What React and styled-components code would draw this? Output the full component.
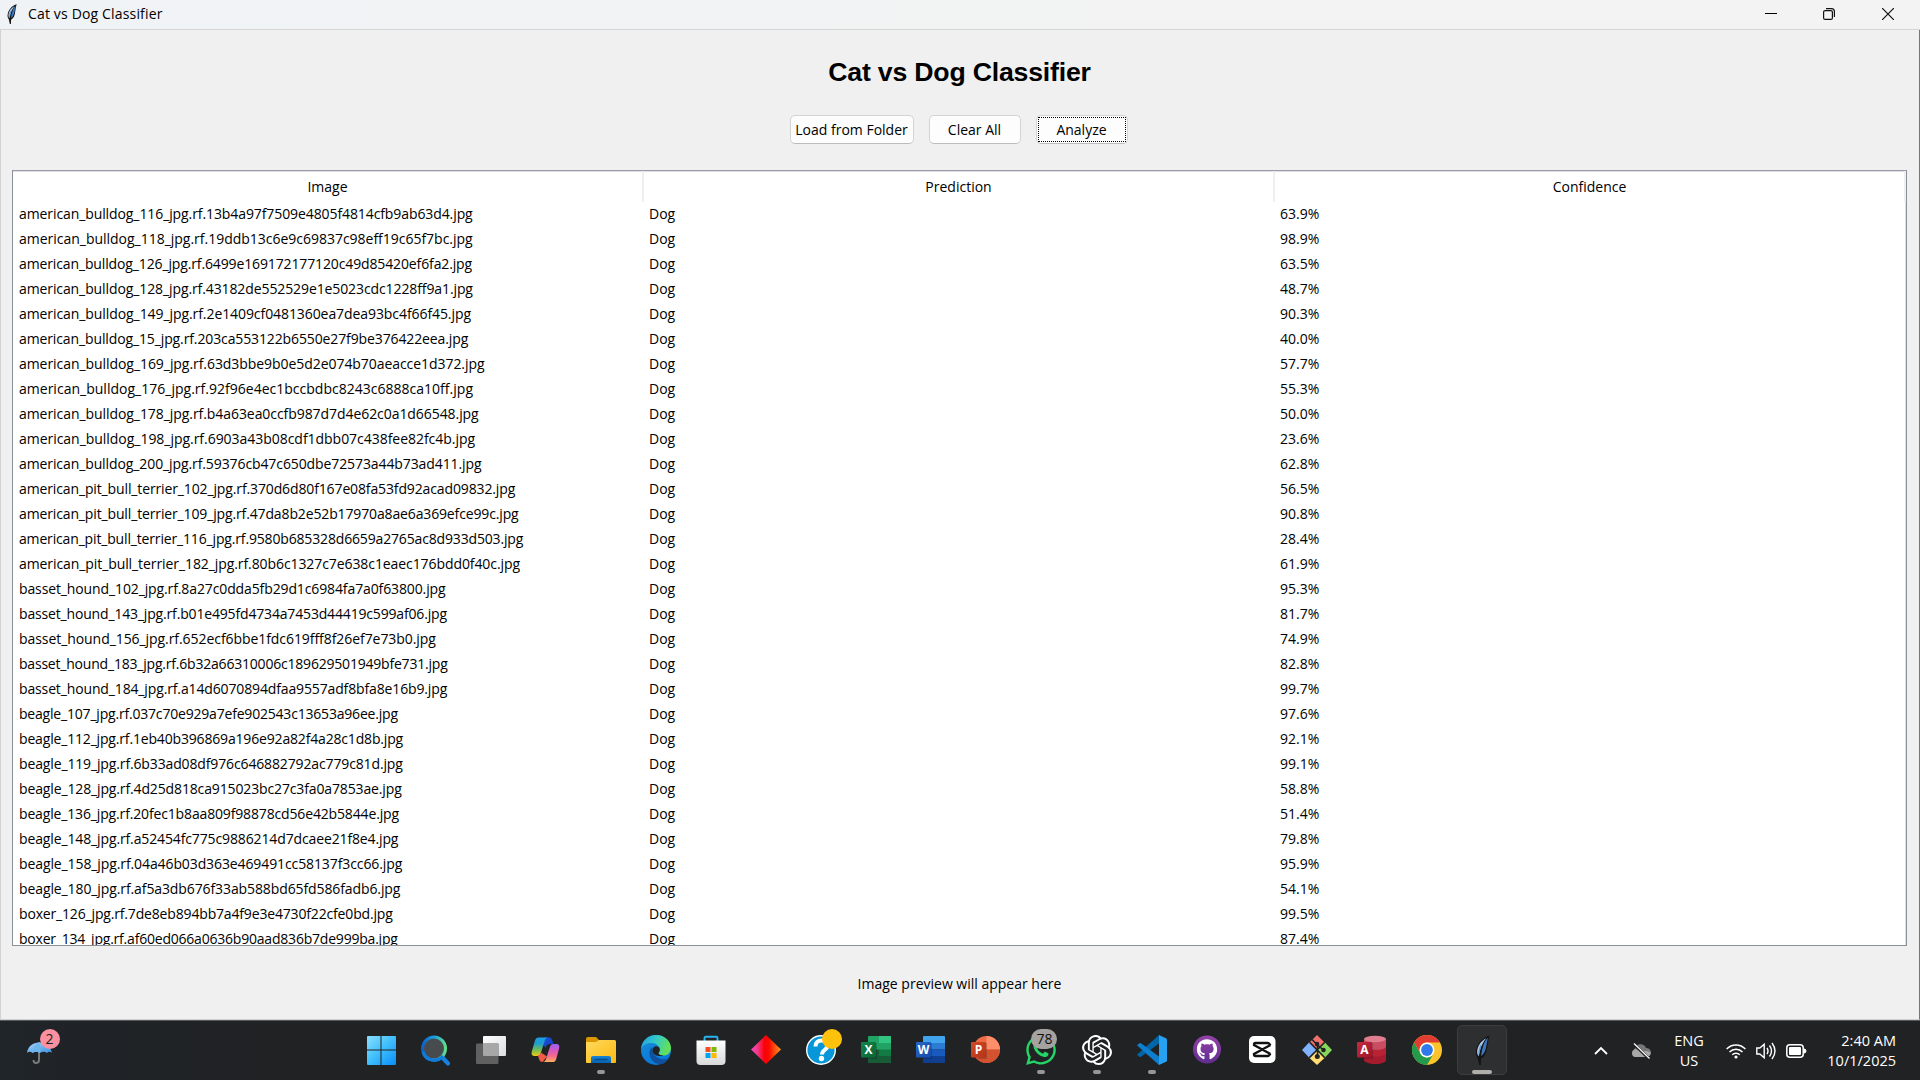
import React from "react";
import styled, { createGlobalStyle } from "styled-components";
import { FaWhatsapp, FaGithub } from "react-icons/fa";
import { SiOpenai } from "react-icons/si";

const Global = createGlobalStyle`
  * { box-sizing: border-box; }
  body { margin: 0; overflow: hidden; }
`;

const ui = `"Open Sans", "Noto Sans", sans-serif`;

const Screen = styled.div`
  width: 1920px;
  height: 1080px;
  display: flex;
  flex-direction: column;
  overflow: hidden;
  font-family: ${ui};
  font-size: 14px;
  color: #000;
  background: #f0f0f0;
`;

const TitleBar = styled.header`
  height: 30px;
  flex: none;
  display: flex;
  align-items: center;
  padding: 0 3px 1px 5px;
  background: linear-gradient(90deg, #f0f3f6, #f3f3f3 60%);
  border-bottom: 1px solid #d3d5d5;
`;

const WindowTitle = styled.span`
  flex: 1;
  margin-left: 9px;
  font-size: 14px;
  letter-spacing: 0.16px;
  line-height: 28px;
  color: #000;
`;

const WindowButton = styled.div`
  width: 58.5px;
  height: 28px;
  display: flex;
  align-items: center;
  justify-content: center;
`;

const Body = styled.main`
  flex: 1;
  min-height: 0;
  display: flex;
  flex-direction: column;
  align-items: center;
  padding: 26px 12px 0 11px;
  border-left: 1px solid #d2d2d2;
  border-right: 1px solid #777;
  border-bottom: 1px solid #d0d0d0;
`;

const Heading = styled.h1`
  margin: 0;
  height: 32px;
  font: bold 26.67px/32px "Liberation Sans", Arial, sans-serif;
  letter-spacing: -0.2px;
  color: #000;
`;

const Buttons = styled.div`
  display: flex;
  gap: 15px;
  margin-top: 27px;
  padding-right: 2px;
`;

const Button = styled.button`
  width: ${(p) => p.$w}px;
  height: 29px;
  padding: 1px;
  border: 1px solid #d4d4d4;
  border-bottom-color: #bcbcbc;
  border-radius: 5px;
  background: #fdfdfd;
  font: 14px/20px ${ui};
  color: #000;
  white-space: nowrap;
`;

const Focus = styled.span`
  display: block;
  height: 25px;
  line-height: 23px;
  border: 1px dotted #000;
`;

const Table = styled.section`
  width: 1895px;
  height: 776px;
  flex: none;
  margin-top: 26px;
  display: flex;
  flex-direction: column;
  overflow: hidden;
  background: #fff;
  border: 1px solid #8b9097;
  border-top-color: #9a9ba5;
  box-shadow: inset -1px 1px 0 #dedfe4;
`;

const HeadRow = styled.div`
  display: grid;
  grid-template-columns: 631px 631px 1fr;
  height: 30px;
  flex: none;
`;

const HeadCell = styled.div`
  text-align: center;
  line-height: 31px;
  border-right: 2px solid #efefef;
`;

const Row = styled.div`
  display: grid;
  grid-template-columns: 631px 631px 1fr;
  height: 25px;
  flex: none;
`;

const Cell = styled.div`
  padding-left: ${(p) => p.$pad || 5}px;
  line-height: 25px;
  white-space: nowrap;
  letter-spacing: ${(p) => p.$track || 0}px;
`;

const Preview = styled.p`
  margin: 26px 0 0;
  line-height: 24px;
`;

const Taskbar = styled.footer`
  height: 60px;
  flex: none;
  display: flex;
  background: linear-gradient(90deg, #202529 0, #1f2327 90px, #212223 340px, #212223 100%);
  border-top: 1px solid #585b5c;
`;

const Weather = styled.div`
  width: 353px;
  padding: 8px 0 0 24px;
`;

const Apps = styled.nav`
  flex: 1;
  display: flex;
`;

const Slot = styled.div`
  width: 55.08px;
  height: 59px;
  display: flex;
  flex-direction: column;
  align-items: center;
  padding-top: 4px;
`;

const Tile = styled.div`
  width: 50px;
  height: 50px;
  position: relative;
  display: flex;
  align-items: center;
  justify-content: center;
  border-radius: 5px;
  border: 1px solid ${(p) => (p.$active ? "#3b3d3f" : "transparent")};
  background: ${(p) => (p.$active ? "#2d2f31" : "none")};
`;

const Indicator = styled.i`
  position: absolute;
  bottom: 0;
  left: 50%;
  width: ${(p) => p.$w}px;
  height: 4px;
  margin-left: ${(p) => -p.$w / 2}px;
  border-radius: 2px;
  background: ${(p) => (p.$w > 10 ? "#b0aeaa" : "#969798")};
`;

const CountBadge = styled.b`
  position: absolute;
  left: 14px;
  top: 3px;
  width: 26px;
  height: 20px;
  border-radius: 10px;
  background: #a5a2a0;
  color: #111;
  font: 14px/20px ${ui};
  text-align: center;
`;

const Tray = styled.aside`
  display: flex;
  align-items: center;
  color: #fff;
  width: 340px;
  padding-left: 13px;
`;

const Clock = styled.div`
  width: ${(p) => p.$w}px;
  text-align: ${(p) => p.$align};
  font-size: 14.5px;
  line-height: 20px;
  margin-left: ${(p) => p.$left || 0}px;
`;

const TrayIcon = styled.span`
  display: flex;
  margin-left: ${(p) => p.$left || 0}px;
`;

/* file name, confidence, letter spacing of the file name */
const rows = [
  ["american_bulldog_116_jpg.rf.13b4a97f7509e4805f4814cfb9ab63d4.jpg", "63.9%", -0.094],
  ["american_bulldog_118_jpg.rf.19ddb13c6e9c69837c98eff19c65f7bc.jpg", "98.9%", -0.017],
  ["american_bulldog_126_jpg.rf.6499e169172177120c49d85420ef6fa2.jpg", "63.5%", -0.13],
  ["american_bulldog_128_jpg.rf.43182de552529e1e5023cdc1228ff9a1.jpg", "48.7%", -0.103],
  ["american_bulldog_149_jpg.rf.2e1409cf0481360ea7dea93bc4f66f45.jpg", "90.3%", -0.078],
  ["american_bulldog_15_jpg.rf.203ca553122b6550e27f9be376422eea.jpg", "40.0%", -0.12],
  ["american_bulldog_169_jpg.rf.63d3bbe9b0e5d2e074b70aeacce1d372.jpg", "57.7%", -0.06],
  ["american_bulldog_176_jpg.rf.92f96e4ec1bccbdbc8243c6888ca10ff.jpg", "55.3%", 0.012],
  ["american_bulldog_178_jpg.rf.b4a63ea0ccfb987d7d4e62c0a1d66548.jpg", "50.0%", -0.065],
  ["american_bulldog_198_jpg.rf.6903a43b08cdf1dbb07c438fee82fc4b.jpg", "23.6%", -0.035],
  ["american_bulldog_200_jpg.rf.59376cb47c650dbe72573a44b73ad411.jpg", "62.8%", -0.099],
  ["american_pit_bull_terrier_102_jpg.rf.370d6d80f167e08fa53fd92acad09832.jpg", "56.5%", -0.129],
  ["american_pit_bull_terrier_109_jpg.rf.47da8b2e52b17970a8ae6a369efce99c.jpg", "90.8%", -0.138],
  ["american_pit_bull_terrier_116_jpg.rf.9580b685328d6659a2765ac8d933d503.jpg", "28.4%", -0.16],
  ["american_pit_bull_terrier_182_jpg.rf.80b6c1327c7e638c1eaec176bdd0f40c.jpg", "61.9%", -0.085],
  ["basset_hound_102_jpg.rf.8a27c0dda5fb29d1c6984fa7a0f63800.jpg", "95.3%", -0.118],
  ["basset_hound_143_jpg.rf.b01e495fd4734a7453d44419c599af06.jpg", "81.7%", -0.167],
  ["basset_hound_156_jpg.rf.652ecf6bbe1fdc619fff8f26ef7e73b0.jpg", "74.9%", -0.065],
  ["basset_hound_183_jpg.rf.6b32a66310006c189629501949bfe731.jpg", "82.8%", -0.205],
  ["basset_hound_184_jpg.rf.a14d6070894dfaa9557adf8bfa8e16b9.jpg", "99.7%", -0.137],
  ["beagle_107_jpg.rf.037c70e929a7efe902543c13653a96ee.jpg", "97.6%", -0.196],
  ["beagle_112_jpg.rf.1eb40b396869a196e92a82f4a28c1d8b.jpg", "92.1%", -0.17],
  ["beagle_119_jpg.rf.6b33ad08df976c646882792ac779c81d.jpg", "99.1%", -0.137],
  ["beagle_128_jpg.rf.4d25d818ca915023bc27c3fa0a7853ae.jpg", "58.8%", -0.135],
  ["beagle_136_jpg.rf.20fec1b8aa809f98878cd56e42b5844e.jpg", "51.4%", -0.152],
  ["beagle_148_jpg.rf.a52454fc775c9886214d7dcaee21f8e4.jpg", "79.8%", -0.128],
  ["beagle_158_jpg.rf.04a46b03d363e469491cc58137f3cc66.jpg", "95.9%", -0.104],
  ["beagle_180_jpg.rf.af5a3db676f33ab588bd65fd586fadb6.jpg", "54.1%", -0.104],
  ["boxer_126_jpg.rf.7de8eb894bb7a4f9e3e4730f22cfe0bd.jpg", "99.5%", -0.166],
  ["boxer_134_jpg.rf.af60ed066a0636b90aad836b7de999ba.jpg", "87.4%", -0.211],
];

const Lin = ({ id, stops, x2 = 0, y2 = 1 }) => (
  <linearGradient id={id} x1="0" y1="0" x2={x2} y2={y2}>
    {stops.map((c, i) => (
      <stop key={i} offset={i / (stops.length - 1)} stopColor={c} />
    ))}
  </linearGradient>
);

const Svg = ({ children, s = 30 }) => (
  <svg width={s} height={s} viewBox="0 0 30 30" overflow="visible">
    {children}
  </svg>
);

const Feather = ({ w, h }) => (
  <svg width={w} height={h} viewBox="0 0 14 28">
    <path d="M13.5.5C8 2 2.5 7 1 14c-.6 3 0 5.500 1.500 7.500L4 28h1.500l.2-6c3-1.500 4.800-5 5.500-9 .2-3 1-5 1-7Z" fill="#141414" />
    <path d="M12 2.500C8.500 6 7 11 5.600 19.500 8.500 18 10 14 10.600 10Z" fill="#3f78bd" />
    <path d="M10.500 3C5.500 5.500 2.500 10 2 15c-.2 2 .4 4 1.500 5C4.500 13 6.500 8 10.500 3Z" fill="#a9c8e6" />
    <path d="M5.500 9.500C4.500 12 4 15 3.600 18" stroke="#5d92cd" strokeWidth="1.200" fill="none" />
  </svg>
);

const Office = ({ id, letter, dark, children }) => (
  <Svg>
    <defs><Lin id={id} stops={dark} x2={1} /></defs>
    {children}
    <path d="M7 8h9v16H7z" fill="#000" opacity=".18" />
    <rect x="0" y="7" width="15" height="15.500" rx="1" fill={`url(#${id})`} />
    <text x="7.500" y="19" textAnchor="middle" fontFamily="Open Sans" fontWeight="700" fontSize="12" fill="#fff">{letter}</text>
  </Svg>
);

const icons = [
  { name: "start", el: (
    <Svg>
      <defs><linearGradient id="win" gradientUnits="userSpaceOnUse" x1="0" y1="0" x2="29" y2="30"><stop stopColor="#8fe2fe" /><stop offset=".5" stopColor="#42bffb" /><stop offset="1" stopColor="#0a90f8" /></linearGradient></defs>
      <path d="M1 2q0-1 1-1h12.500v13.500H1ZM15.500 1H29q1 0 1 1v12.500H15.500ZM1 15.500h13.500V30H2q-1 0-1-1ZM15.500 15.500H30V29q0 1-1 1H15.500Z" fill="url(#win)" />
    </Svg>) },
  { name: "search", el: (
    <Svg>
      <defs><Lin id="lens" stops={["#0a62c8", "#1b9de2", "#5fe08c"]} x2={1} y2={0} /></defs>
      <path d="M20.500 21.500 27 28.500" stroke="#1682dd" strokeWidth="4.200" strokeLinecap="round" />
      <circle cx="13" cy="13.500" r="11.500" fill="#484b4e" stroke="url(#lens)" strokeWidth="3" />
      <path d="M2 17a11.500 11.500 0 0 0 20 4" fill="none" stroke="#0f7bdc" strokeWidth="3" />
    </Svg>) },
  { name: "task-view", el: (
    <Svg>
      <defs><Lin id="tv" stops={["#fff", "#dcdcdc"]} x2={1} /></defs>
      <rect x="7" y="1" width="23" height="20" rx="1" fill="url(#tv)" />
      <rect x="0" y="8.500" width="22.500" height="20.500" rx="1" fill="#606060" />
      <path d="M7 8.500h15.500V21H8q-1 0-1-1Z" fill="#a7a7a7" />
    </Svg>) },
  { name: "copilot", el: (
    <Svg>
      <defs>
        <Lin id="cp1" stops={["#17a0e8", "#229dcc", "#70bc55", "#f0cb18"]} />
        <Lin id="cp2" stops={["#9a62f2", "#d258c4", "#f4698c", "#ffb05c"]} />
        <Lin id="cp3" stops={["#1b55df", "#1638b8"]} x2={1} />
      </defs>
      <path d="M18 2.500c2.300 0 3 1.700 3.700 4L22.500 9H19c-2.500 0-3.500 1-4.500 4L11 8l2-5.500Z" fill="url(#cp3)" />
      <path d="M7.500 2.500h10c-2.500 0-3.300 1.600-4 4L10 17.500C9.200 20 8.200 21 6 21H3.500C1 21 0 19 .8 16.500L4 5.500c.7-2 1.700-3 3.500-3Z" fill="url(#cp1)" />
      <path d="M11.500 27c-2.200 0-3.100-1.500-3.800-4L7 20.500c1.800-.3 2.500-1.500 3-3l6 4Z" fill="#f15b45" />
      <path d="M22.500 27h-11c2.500 0 3.300-2 4-4.500l3.200-10C19.500 10 20.500 9 22.500 9h3c2.400 0 3.300 2 2.600 4.500L25.500 23c-.7 2.500-1.600 4-3 4Z" fill="url(#cp2)" />
    </Svg>) },
  { name: "explorer", run: 8, el: (
    <Svg>
      <defs><Lin id="fold" stops={["#ffda5c", "#fcb913"]} x2={1} /><Lin id="fold2" stops={["#1684d8", "#0b61ae"]} /></defs>
      <path d="M0 4q0-2 2-2h8l3 3v5H0Z" fill="#dc9600" />
      <path d="M0 7h10l3-2h15.500Q30 5 30 6.500V27q0 1-1 1H1q-1 0-1-1Z" fill="url(#fold)" />
      <path d="M5 28v-5q0-2 2-2h16q2 0 2 2v5Z" fill="url(#fold2)" />
      <path d="M9 24.500h12" stroke="#064b8a" strokeWidth="1.300" strokeLinecap="round" />
    </Svg>) },
  { name: "edge", el: (
    <Svg>
      <defs><Lin id="ed1" stops={["#229cdf", "#32c8cc", "#62e05b"]} x2={1} y2={0.3} /><Lin id="ed2" stops={["#1a8ed6", "#0878da"]} x2={0.4} /></defs>
      <circle cx="15" cy="15" r="15" fill="url(#ed2)" />
      <path d="M0 14C1 5 7.500 0 15 0c9 0 15 6.500 15 13 0 5-3.500 7.500-7.500 7.500-3.500 0-5-1.300-5-2.300 0-.7 1.300-1.500 1.300-3.700 0-3.500-3.500-6.500-8.300-6.500C5.500 8 1.500 10.500 0 14Z" fill="url(#ed1)" />
      <path d="M11 12c-3 3-3.500 8-.5 12.500 3 4 8 5.500 12 4 2.500-1.500 4.500-3.500 5.500-5.500-2.500 1.500-7.500 2-11 0-4.500-2.500-6.500-6.500-6-11Z" fill="#10509c" />
      <path d="M18.800 14.500c0 2.200-1.300 3-1.300 3.700 0 1 1.500 2.300 5 2.300-4 1.500-10 0-11-4-.5-2.500 1-5 3.500-5.200 2.500 0 3.800 1.500 3.800 3.200Z" fill="#202224" />
    </Svg>) },
  { name: "store", el: (
    <Svg>
      <defs><Lin id="st" stops={["#fff", "#dadada"]} /></defs>
      <path d="M8.500 7V3q0-1.200 1.200-1.200h10.600q1.200 0 1.200 1.200v4" fill="none" stroke="#28b4f0" strokeWidth="1.900" />
      <path d="M.5 5.500H29.500V26q0 4-4 4h-21q-4 0-4-4Z" fill="url(#st)" />
      <path d="M9.500 12h5v5h-5z" fill="#f25022" /><path d="M15.500 12h5v5h-5z" fill="#7fba00" />
      <path d="M9.500 18h5v5h-5z" fill="#00a4ef" /><path d="M15.500 18h5v5h-5z" fill="#ffb900" />
    </Svg>) },
  { name: "diamond", el: (
    <Svg>
      <defs><linearGradient id="dia"><stop stopColor="#f247bd" /><stop offset=".2" stopColor="#f13c8f" /><stop offset=".45" stopColor="#fb0008" /><stop offset=".6" stopColor="#fb0a00" /><stop offset="1" stopColor="#ff9a1e" /></linearGradient></defs>
      <path d="M15 0 30 14.500 15 29 0 14.500Z" fill="url(#dia)" />
    </Svg>) },
  { name: "help", el: (
    <Svg>
      <circle cx="15" cy="15" r="14.300" fill="#0796d7" stroke="#fff" strokeWidth="1.400" />
      <path d="M9.500 11.500c0-4 2.500-6 6-6s6 2 6 5c0 4.500-5.500 4-5.500 9" fill="none" stroke="#fff" strokeWidth="4" />
      <circle cx="15.500" cy="23.500" r="2.700" fill="#fff" />
      <circle cx="26" cy="4" r="10" fill="#ffc20c" />
    </Svg>) },
  { name: "excel", el: (
    <Office id="xl" letter="X" dark={["#128447", "#0a6635"]}>
      <path d="M8 1h21q1 0 1 1v26H7V2q0-1 1-1Z" fill="#21a366" />
      <path d="M18 1h11q1 0 1 1v6H18Z" fill="#33c481" />
      <path d="M7 14.500h11V21H7Z" fill="#185c37" /><path d="M18 14.500h12V21H18Z" fill="#107c41" />
      <path d="M7 21h23v6q0 1-1 1H7Z" fill="#185c37" />
    </Office>) },
  { name: "word", el: (
    <Office id="wd" letter="W" dark={["#2368c8", "#174bac"]}>
      <path d="M8 1h20q1 0 1 1v6H7V2q0-1 1-1Z" fill="#41a5ee" />
      <path d="M7 8h22v6.500H7Z" fill="#2b7cd3" /><path d="M7 14.500h22V21H7Z" fill="#185abd" />
      <path d="M7 21h22v6q0 1-1 1H8q-1 0-1-1Z" fill="#103f91" />
    </Office>) },
  { name: "powerpoint", el: (
    <Office id="pp" letter="P" dark={["#d04a27", "#b53316"]}>
      <circle cx="15.500" cy="14.500" r="13.500" fill="#ed6c47" />
      <path d="M15.500 1A13.500 13.500 0 0 1 29 14.500H15.500Z" fill="#ff8f6b" />
      <path d="M29 14.500a13.500 13.500 0 0 1-27 0Z" fill="#d35230" />
    </Office>) },
  { name: "whatsapp", run: 8, count: "78", el: <FaWhatsapp size={34} color="#25d366" /> },
  { name: "openai", run: 8, el: <SiOpenai size={30} color="#fff" /> },
  { name: "vscode", run: 8, el: (
    <Svg>
      <path d="M.5 19.200 22 0v8.500L4 21.800q-.8.600-1.500 0l-2-1.500q-.7-.500 0-1.100Z" fill="#0065a9" />
      <path d="M.5 10.800 22 30v-8.500L4 8.200q-.8-.6-1.500 0l-2 1.500q-.7.500 0 1.100Z" fill="#0e7fce" />
      <path d="M22 0 29 3.200q1 .500 1 1.600v20.400q0 1.100-1 1.600L22 30V0Z" fill="#27a2f2" />
    </Svg>) },
  { name: "github", el: (
    <Svg>
      <defs><Lin id="gh" stops={["#9442a8", "#5f2d91"]} /></defs>
      <circle cx="15" cy="14.500" r="14" fill="url(#gh)" />
      <g transform="translate(4.500 4)"><FaGithub size={21} color="#fff" /></g>
    </Svg>) },
  { name: "capcut", el: (
    <Svg>
      <rect x="2" y="1" width="26.500" height="27" rx="5" fill="#fff" />
      <path d="M23.500 10.500 22 8.500Q21.500 8 20.700 8H8.500Q7 8 7 9.500V10L23.500 19M23.500 18.500 22 20.500q-.5.500-1.300.5H8.500Q7 21 7 19.500V19L23.500 10" fill="none" stroke="#111" strokeWidth="2.300" />
    </Svg>) },
  { name: "git", el: (
    <Svg>
      <path d="M15 0 22.500 7.500 15 15 7.500 7.500Z" fill="#f0706c" /><path d="M7 7.500 14.500 15 7 22.500 0 15Z" fill="#80b3ff" />
      <path d="M23 7.500 30 15l-7 7.500-7.500-7.500Z" fill="#87d75b" /><path d="M15 15.500 22.500 23 15 30 7.500 23Z" fill="#ffdd72" />
      <path d="M8 7.500 22.500 22.500M22.500 7.500 7.500 22.500M10 4.500l5.500 5.500v11M15.500 10l6 5" stroke="#202224" strokeWidth="1.600" fill="none" />
      <circle cx="15" cy="9" r="2.300" fill="#202224" /><circle cx="21.500" cy="15" r="2.300" fill="#202224" /><circle cx="15.300" cy="21.500" r="2.500" fill="#202224" />
    </Svg>) },
  { name: "access", el: (
    <Office id="ac" letter="A" dark={["#c52a40", "#9d1429"]}>
      <path d="M7 4v21c0 2 5 4 11.500 4S29 27 29 25V4Z" fill="#a61c2e" />
      <path d="M7 4v14c2 2 6 3.500 11.500 3.500S27 20.500 29 18.500V4Z" fill="#b82436" />
      <path d="M7 4v7.500c2 2 6 3.300 11.500 3.300S27 14 29 12V4Z" fill="#c94d60" />
      <ellipse cx="18" cy="4" rx="11" ry="3.200" fill="#e07e90" />
    </Office>) },
  { name: "chrome", el: (
    <Svg>
      <circle cx="15" cy="15" r="15" fill="#fcc42c" />
      <path d="M2 7.500A15 15 0 0 1 28 7.500H15A7.500 7.500 0 0 0 8.500 18.800Z" fill="#e23c32" />
      <path d="M2 7.500A15 15 0 0 0 15 30L21.500 18.800A7.500 7.500 0 0 1 8.500 18.800Z" fill="#239a4d" />
      <circle cx="15" cy="15" r="7.400" fill="#fff" /><circle cx="15" cy="15" r="5.900" fill="#3079ed" />
    </Svg>) },
  { name: "tk", run: 20, active: true, el: <Feather w={15} h={30} /> },
];

const Umbrella = () => (
  <svg width="40" height="42" viewBox="0 0 40 42">
    <defs><Lin id="um" stops={["#a5d5fa", "#3c91df"]} x2={1} /></defs>
    <path d="M15 13v18q0 3-3 3-2.500 0-2.500-3" fill="none" stroke="#77797b" strokeWidth="2" />
    <path d="M3 24C4 17 9 13.500 15 13.500S26.500 17 28 24q-2.500-2.500-5 0-3.500-2.500-7 0-4-2.500-7.500 0Q5.500 21.500 3 24Z" fill="url(#um)" />
    <path d="M15 13.500c-4 2-6 6-6.500 10.500Q12 21.500 16 24c1-5 0-8-1-10.500Z" fill="#70b6ee" />
    <circle cx="26" cy="10" r="10" fill="#fb91a0" />
    <text x="25.500" y="15.200" textAnchor="middle" fontFamily="Open Sans" fontSize="14" fill="#1c1c1c">2</text>
  </svg>
);

export default function App() {
  return (
    <Screen>
      <Global />
      <TitleBar>
        <Feather w={14} h={20} />
        <WindowTitle>Cat vs Dog Classifier</WindowTitle>
        <WindowButton><svg width="12" height="12"><path d="M0 5.500h12" stroke="#000" /></svg></WindowButton>
        <WindowButton>
          <svg width="12" height="12" fill="none" stroke="#111" strokeWidth="1.200">
            <rect x=".6" y="2.600" width="8.800" height="8.800" rx="1.500" /><path d="M3 .6h5.500q2.900 0 2.900 2.900V9" />
          </svg>
        </WindowButton>
        <WindowButton><svg width="12" height="12"><path d="m0 0 12 12M12 0 0 12" stroke="#111" strokeWidth="1.200" /></svg></WindowButton>
      </TitleBar>
      <Body>
        <Heading>Cat vs Dog Classifier</Heading>
        <Buttons>
          <Button $w={124}>Load from Folder</Button>
          <Button $w={92}>Clear All</Button>
          <Button $w={92}><Focus>Analyze</Focus></Button>
        </Buttons>
        <Table>
          <HeadRow>
            <HeadCell>Image</HeadCell>
            <HeadCell>Prediction</HeadCell>
            <HeadCell>Confidence</HeadCell>
          </HeadRow>
          {rows.map(([file, confidence, track]) => (
            <Row key={file}>
              <Cell $pad={6} $track={track}>{file}</Cell>
              <Cell>Dog</Cell>
              <Cell>{confidence}</Cell>
            </Row>
          ))}
        </Table>
        <Preview>Image preview will appear here</Preview>
      </Body>
      <Taskbar>
        <Weather><Umbrella /></Weather>
        <Apps>
          {icons.map((a) => (
            <Slot key={a.name}>
              <Tile $active={a.active}>
                {a.el}
                {a.count && <CountBadge>{a.count}</CountBadge>}
                {a.run && <Indicator $w={a.run} />}
              </Tile>
            </Slot>
          ))}
        </Apps>
        <Tray>
          <TrayIcon $left={1}><svg width="14" height="9"><path d="m1 8 6-6 6 6" fill="none" stroke="#fff" strokeWidth="1.800" /></svg></TrayIcon>
          <TrayIcon $left={23}>
            <svg width="20" height="16" viewBox="0 0 20 16">
              <path d="M4 14a4 4 0 0 1-.5-7.500A6 6 0 0 1 15 5a4.500 4.500 0 0 1 1 9Z" fill="#777" />
              <path d="M4 14a4 4 0 0 1 0-7.700Q9 6 11 9q4-2 8.500.5A4.500 4.500 0 0 1 16 14Z" fill="#a8a8a8" />
              <path d="m2 .5 16 15" stroke="#212223" strokeWidth="3" /><path d="m3 .5 15.500 15" stroke="#fff" strokeWidth="1.200" />
            </svg>
          </TrayIcon>
          <Clock $w={40} $align="center" $left={18}>ENG<br />US</Clock>
          <TrayIcon $left={17}>
            <svg width="20" height="16" viewBox="0 0 20 16" fill="none" stroke="#fff" strokeWidth="1.500">
              <path d="M.6 6a13 13 0 0 1 18.800 0M3.500 9a9 9 0 0 1 13 0M6.200 11.800a5.400 5.400 0 0 1 7.600 0" /><circle cx="10" cy="14" r="1.600" fill="#fff" stroke="none" />
            </svg>
          </TrayIcon>
          <TrayIcon $left={10}>
            <svg width="21" height="18" viewBox="0 0 21 18" fill="none" stroke="#fff" strokeWidth="1.400">
              <path d="M.8 6v6h3l4.400 3.800V2.200L3.800 6ZM11 6q2 3 0 6M13.500 3.500q4 5.500 0 11M16 1q6 8 0 16" />
            </svg>
          </TrayIcon>
          <TrayIcon $left={9}>
            <svg width="21" height="14" viewBox="0 0 21 14"><rect x=".8" y=".8" width="16.400" height="12.400" rx="3" fill="none" stroke="#fff" strokeWidth="1.500" /><rect x="3" y="3" width="12" height="8" rx="1" fill="#fff" /><path d="M18 5q2 0 2 2t-2 2Z" fill="#fff" stroke="#fff" /></svg>
          </TrayIcon>
          <Clock $w={80} $align="right" $left={9}>2:40 AM<br />10/1/2025</Clock>
        </Tray>
      </Taskbar>
    </Screen>
  );
}
